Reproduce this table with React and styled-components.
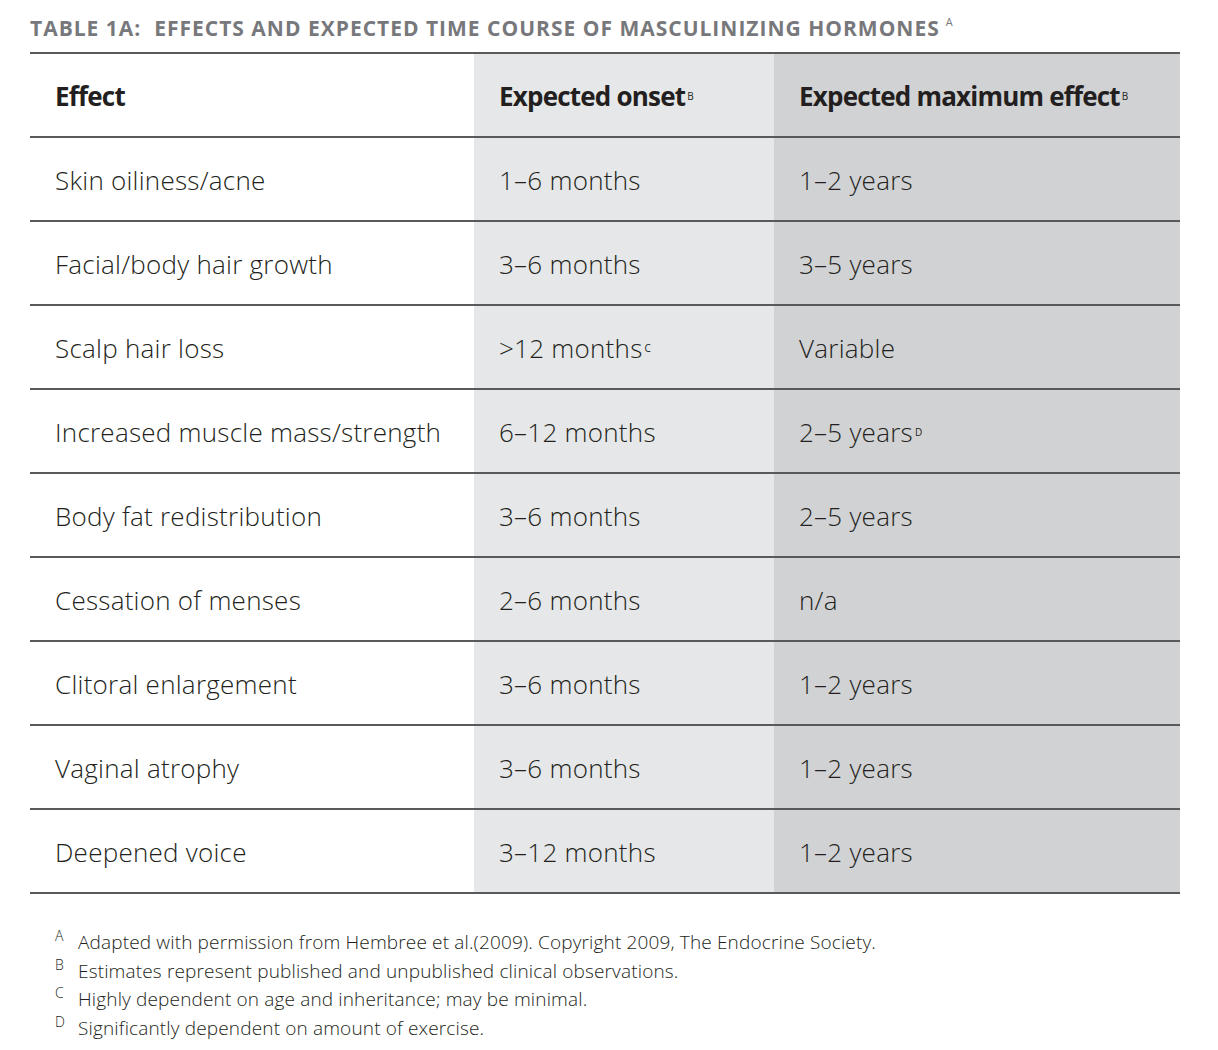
import React from "react";
import styled, { createGlobalStyle } from "styled-components";

const Global = createGlobalStyle`
  body { margin: 0; background: #fff; font-family: "Open Sans", "Liberation Sans", sans-serif; }
`;

const Page = styled.div`
  width: 1218px;
  height: 1050px;
  padding: 8px 38px 0 30px;
  box-sizing: border-box;
  color: #231f20;
`;

const Title = styled.h1`
  margin: 0;
  height: 44px;
  font-size: 21px;
  font-weight: 700;
  color: #77787b;
  letter-spacing: 1px;
  line-height: 28px;
  white-space: nowrap;
  sup { font-size: 11px; font-weight: 400; margin-left: 6px; vertical-align: 10px; }
`;

const Table = styled.div`
  display: grid;
  grid-template-columns: 444px 300px 406px;
  border-top: 2px solid #58595b;
`;

const Cell = styled.div`
  height: 84px;
  box-sizing: border-box;
  display: flex;
  align-items: center;
  padding-left: 25px;
  padding-top: ${(p) => (p.$head ? 2 : 1)}px;
  font-size: 26px;
  font-weight: ${(p) => (p.$head ? 700 : 300)};
  letter-spacing: ${(p) => (p.$head ? "-0.8px" : "0.25px")};
  color: #231f20;
  background: ${(p) => (p.$col === 1 ? "#e6e7e8" : p.$col === 2 ? "#d1d2d4" : "#fff")};
  border-bottom: 2px solid #58595b;
  white-space: nowrap;
  sup { font-size: 10px; font-weight: 400; vertical-align: 12px; margin-left: 2px; letter-spacing: 0; }
`;

const Notes = styled.div`
  padding: 35px 0 0 25px;
  font-size: 19px;
  font-weight: 300;
  color: #231f20;
`;

const Note = styled.div`
  display: flex;
  height: 28.5px;
  align-items: flex-start;
`;

const NoteMark = styled.span`
  width: 23px;
  font-size: 14px;
  line-height: 14px;
`;

const NoteText = styled.span`
  line-height: 34px;
  margin-top: -4px;
  letter-spacing: 0.15px;
`;

const rows = [
  ["Skin oiliness/acne", "1–6 months", "1–2 years"],
  ["Facial/body hair growth", "3–6 months", "3–5 years"],
  ["Scalp hair loss", <>&gt;12 months<sup>C</sup></>, "Variable"],
  ["Increased muscle mass/strength", "6–12 months", <>2–5 years<sup>D</sup></>],
  ["Body fat redistribution", "3–6 months", "2–5 years"],
  ["Cessation of menses", "2–6 months", "n/a"],
  ["Clitoral enlargement", "3–6 months", "1–2 years"],
  ["Vaginal atrophy", "3–6 months", "1–2 years"],
  ["Deepened voice", "3–12 months", "1–2 years"],
];

const notes = [
  ["A", "Adapted with permission from Hembree et al.(2009). Copyright 2009, The Endocrine Society."],
  ["B", "Estimates represent published and unpublished clinical observations."],
  ["C", "Highly dependent on age and inheritance; may be minimal."],
  ["D", "Significantly dependent on amount of exercise."],
];

export default function App() {
  return (
    <Page>
      <Global />
      <Title>
        TABLE 1A:&nbsp; EFFECTS AND EXPECTED TIME COURSE OF MASCULINIZING HORMONES<sup>A</sup>
      </Title>
      <Table>
        <Cell $head $col={0}>Effect</Cell>
        <Cell $head $col={1}>Expected onset<sup>B</sup></Cell>
        <Cell $head $col={2}>Expected maximum effect<sup>B</sup></Cell>
        {rows.map((r, i) => (
          <React.Fragment key={i}>
            <Cell $col={0}>{r[0]}</Cell>
            <Cell $col={1}>{r[1]}</Cell>
            <Cell $col={2}>{r[2]}</Cell>
          </React.Fragment>
        ))}
      </Table>
      <Notes>
        {notes.map(([m, t]) => (
          <Note key={m}>
            <NoteMark>{m}</NoteMark>
            <NoteText>{t}</NoteText>
          </Note>
        ))}
      </Notes>
    </Page>
  );
}
